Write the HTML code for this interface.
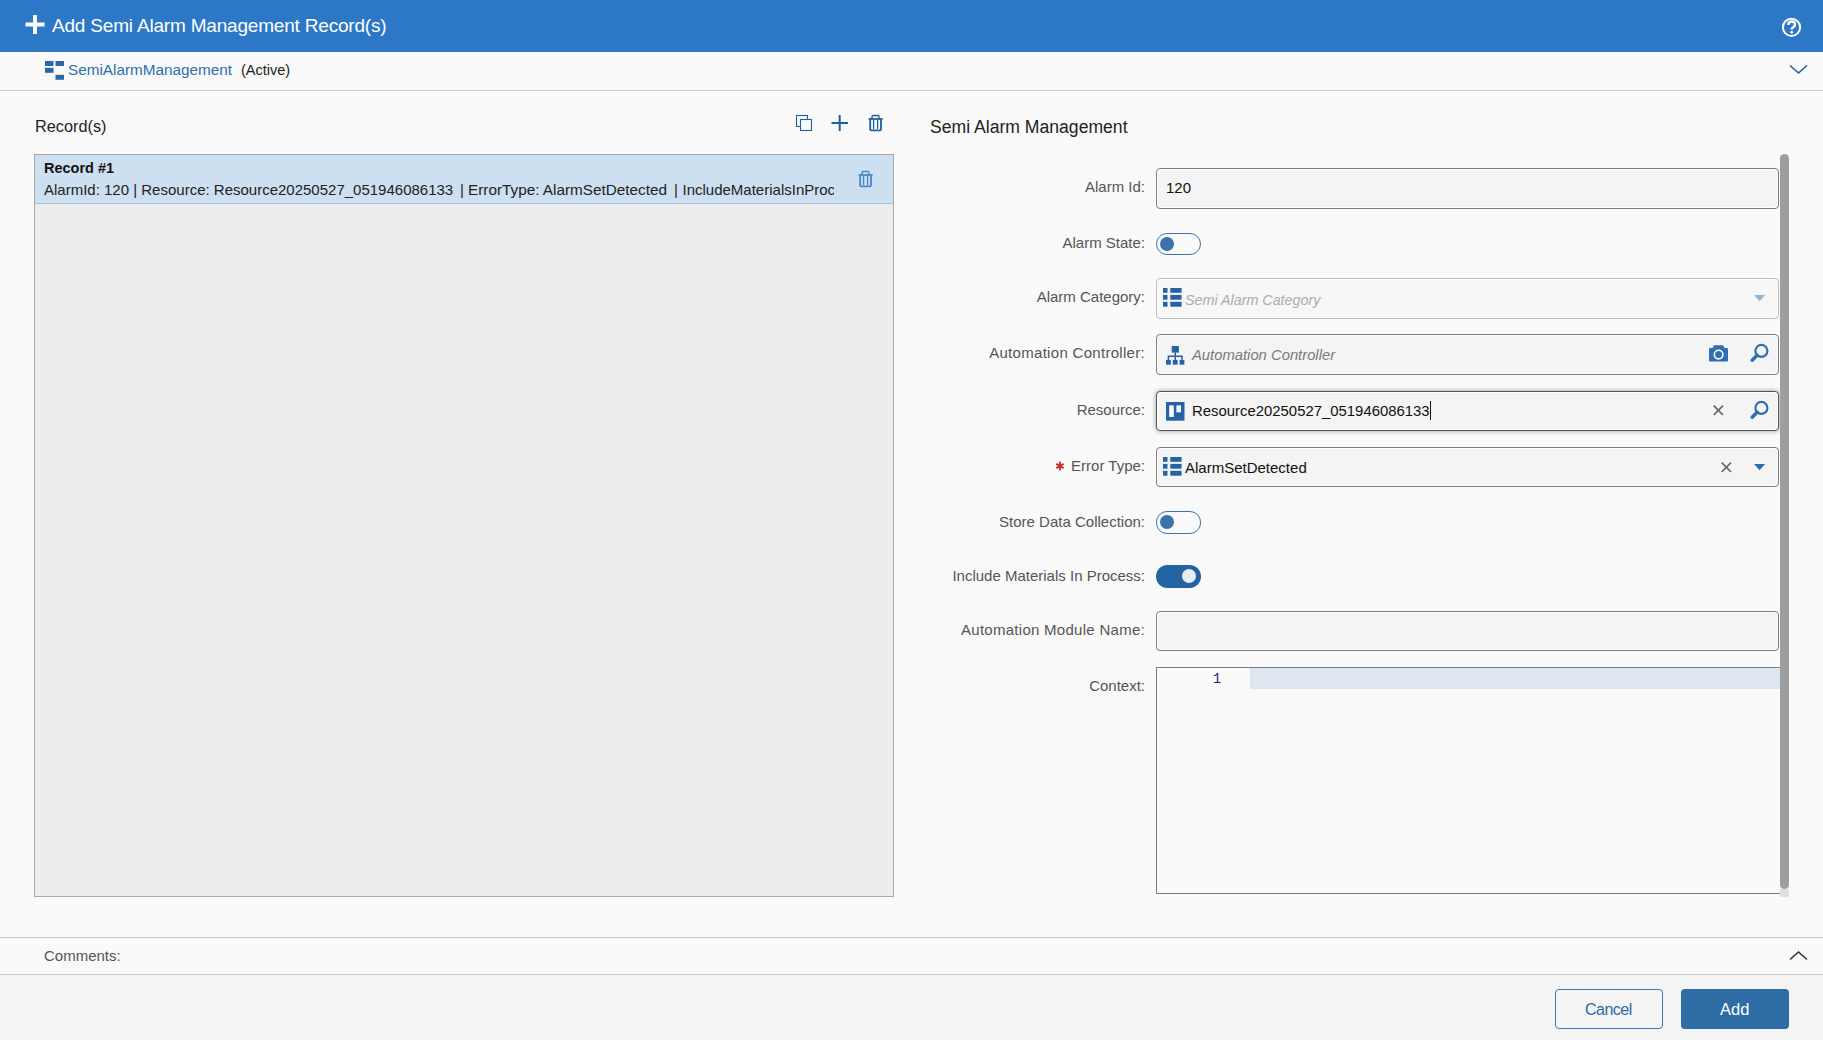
<!DOCTYPE html>
<html><head><meta charset="utf-8">
<style>
*{margin:0;padding:0;box-sizing:border-box}
html,body{width:1823px;height:1040px;overflow:hidden;background:#fafafa;font-family:"Liberation Sans",sans-serif;color:#222}
.a{position:absolute}
.t{position:absolute;white-space:nowrap;line-height:20px}
svg{position:absolute;overflow:visible}
#hdr{left:0;top:0;width:1823px;height:52px;background:#2c78c6}
#sub{left:0;top:52px;width:1823px;height:39px;background:#fafafa;border-bottom:1px solid #cbcbcb}
.lbl{position:absolute;right:678px;white-space:nowrap;line-height:20px;font-size:15px;color:#555;margin-top:1px}
.inp{position:absolute;left:1156px;width:623px;height:41px;background:#f4f4f4;border:1px solid #7d7d7d;border-radius:4px;box-shadow:inset 0 0 0 1px #fff}
.tog{position:absolute;left:1156px;width:45px;height:22px;border:1.5px solid #3b74ae;border-radius:11px;background:#fafafa}
.tog i{position:absolute;left:2.5px;top:2.5px;width:14px;height:14px;border-radius:50%;background:#3a72aa}
</style></head><body>

<!-- header -->
<div id="hdr" class="a"></div>
<svg width="20" height="20" style="left:25px;top:15px"><path d="M10 0V19M0.5 9.5H19.5" stroke="#fff" stroke-width="4"/></svg>
<div class="t" style="left:52px;top:16px;font-size:19px;letter-spacing:-0.19px;color:#fff">Add Semi Alarm Management Record(s)</div>
<svg width="22" height="22" style="left:1781px;top:17px"><circle cx="10.5" cy="10.3" r="8.6" fill="none" stroke="#fff" stroke-width="2"/><path d="M7.4 8Q7.4 4.6 10.7 4.6Q14 4.6 14 7.6Q14 9.4 12 10.4Q10.7 11 10.7 12.6" fill="none" stroke="#fff" stroke-width="2.5"/><circle cx="10.7" cy="15.2" r="1.35" fill="#fff"/></svg>

<!-- sub header -->
<div id="sub" class="a"></div>
<svg width="20" height="20" style="left:45px;top:61px"><rect x="0" y="0" width="8.5" height="5" fill="#2b66a6"/><rect x="10.5" y="0" width="8.5" height="5" fill="#2b66a6"/><rect x="0" y="6.8" width="8.5" height="5" fill="#2b66a6"/><rect x="10.5" y="13.8" width="8.5" height="5" fill="#2b66a6"/></svg>
<div class="t" style="left:68px;top:60px;font-size:15.3px;color:#2f6fb0">SemiAlarmManagement</div>
<div class="t" style="left:241px;top:60px;font-size:14.5px;color:#222">(Active)</div>
<svg width="20" height="12" style="left:1789px;top:64px"><path d="M1 1.5L9.5 9L18 1.5" fill="none" stroke="#1f5f9f" stroke-width="1.6"/></svg>

<!-- left panel -->
<div class="t" style="left:35px;top:116px;font-size:16.3px;color:#222">Record(s)</div>
<svg width="18" height="18" style="left:795px;top:114px"><rect x="1.5" y="1.5" width="11" height="11" fill="none" stroke="#1f5fa0" stroke-width="1.1"/><rect x="5.5" y="5.5" width="11" height="11" fill="#fafafa" stroke="#1f5fa0" stroke-width="1.1"/></svg>
<svg width="18" height="18" style="left:831px;top:114px"><path d="M8.7 1V17M0.5 8.9H17" stroke="#1f5fa0" stroke-width="2"/></svg>
<svg width="16" height="18" style="left:868px;top:114px"><path d="M4 4.5V2.8Q4 1.5 5.5 1.5H9.5Q11 1.5 11 2.8V4.5" fill="none" stroke="#1f5fa0" stroke-width="1.4"/><path d="M0.6 5H14.6" stroke="#1f5fa0" stroke-width="1.8"/><path d="M2.2 5.5V15.2Q2.2 16.4 3.4 16.4H11.8Q13 16.4 13 15.2V5.5" fill="none" stroke="#1f5fa0" stroke-width="1.8"/><path d="M5.6 6V15M9.6 6V15" stroke="#1f5fa0" stroke-width="1.3"/></svg>

<div class="a" style="left:34px;top:154px;width:860px;height:743px;background:#ededed;border:1px solid #a8a8a8"></div>
<div class="a" style="left:35px;top:155px;width:858px;height:49px;background:#cde0f1;border-bottom:1px solid #a7c0d6"></div>
<div class="t" style="left:44px;top:158px;font-size:14.5px;font-weight:700;color:#111">Record #1</div>
<div class="t" style="left:44px;top:180px;font-size:15px;color:#222">AlarmId: 120 | Resource: Resource20250527_051946086133</div>
<div class="t" style="left:460px;top:180px;font-size:15px;color:#222">|</div>
<div class="t" style="left:468px;top:180px;font-size:15.3px;color:#222">ErrorType: AlarmSetDetected</div>
<div class="t" style="left:674px;top:180px;font-size:15px;color:#222">|</div>
<div class="t" style="left:682.5px;top:180px;font-size:15px;color:#222;width:151.5px;overflow:hidden">IncludeMaterialsInProcess: true</div>
<svg width="16" height="18" style="left:858px;top:170px"><path d="M4 4.5V2.8Q4 1.5 5.5 1.5H9.5Q11 1.5 11 2.8V4.5" fill="none" stroke="#4a86c1" stroke-width="1.4"/><path d="M0.6 5H14.6" stroke="#4a86c1" stroke-width="1.8"/><path d="M2.2 5.5V15.2Q2.2 16.4 3.4 16.4H11.8Q13 16.4 13 15.2V5.5" fill="none" stroke="#4a86c1" stroke-width="1.8"/><path d="M5.6 6V15M9.6 6V15" stroke="#4a86c1" stroke-width="1.3"/></svg>

<!-- right panel -->
<div class="t" style="left:930px;top:117px;font-size:17.6px;color:#222">Semi Alarm Management</div>

<!-- FORM -->
<div class="lbl" style="top:176px">Alarm Id:</div>
<div class="inp" style="top:168px"></div>
<div class="t" style="left:1166px;top:178px;font-size:15px;color:#111">120</div>

<div class="lbl" style="top:232px">Alarm State:</div>
<div class="tog" style="top:233px"><i></i></div>

<div class="lbl" style="top:286px">Alarm Category:</div>
<div class="inp" style="top:278px;background:#f7f7f7;border-color:#bdbdbd"></div>
<svg width="20" height="20" style="left:1162.5px;top:288px"><g fill="#2563a6"><rect x="0" y="0" width="4.5" height="4.8"/><rect x="7.3" y="0" width="11.3" height="4.8"/><rect x="0" y="6.9" width="4.5" height="4.8"/><rect x="7.3" y="6.9" width="11.3" height="4.8"/><rect x="0" y="13.8" width="4.5" height="4.9"/><rect x="7.3" y="13.8" width="11.3" height="4.9"/></g></svg>
<div class="t" style="left:1185px;top:289.5px;font-size:14.3px;font-style:italic;color:#adadad">Semi Alarm Category</div>
<svg width="12" height="7" style="left:1753.5px;top:295px"><path d="M0 0H11.2L5.6 6.2Z" fill="#95b6d4"/></svg>

<div class="lbl" style="top:342px;letter-spacing:0.3px">Automation Controller:</div>
<div class="inp" style="top:334px"></div>
<svg width="20" height="20" style="left:1166px;top:346px"><g fill="#2563a6"><rect x="5.7" y="0" width="7.2" height="6.6"/><rect x="0" y="14" width="4.8" height="4.7"/><rect x="6.8" y="14" width="4.8" height="4.7"/><rect x="13.6" y="14" width="4.8" height="4.7"/></g><path d="M9.3 6.6V14M2.4 14V10.2H16V14" fill="none" stroke="#2563a6" stroke-width="1.5"/></svg>
<div class="t" style="left:1192px;top:345px;font-size:14.8px;font-style:italic;color:#7a7a7a">Automation Controller</div>
<svg width="20" height="18" style="left:1709px;top:345px"><path d="M3.5 3.3L4.8 0.3H14.2L15.5 3.3Z" fill="#3170ae"/><rect x="0" y="3" width="19" height="13.5" rx="1.2" fill="#3170ae"/><circle cx="9.6" cy="9.6" r="4.3" fill="none" stroke="#fff" stroke-width="1.6"/><circle cx="9.6" cy="9.6" r="2.4" fill="#3170ae"/></svg>
<svg width="20" height="20" style="left:1750px;top:342px"><circle cx="11.4" cy="8.9" r="6" fill="none" stroke="#2f6fad" stroke-width="2.2"/><path d="M7.2 13.2L2.2 18.2" stroke="#2f6fad" stroke-width="3.4" stroke-linecap="round"/></svg>

<div class="lbl" style="top:399px">Resource:</div>
<div class="inp" style="top:391px;height:40px;border-color:#555;box-shadow:inset 0 0 0 1px #fff,0 0 5px rgba(0,0,0,0.4)"></div>
<svg width="20" height="20" style="left:1166px;top:402px"><rect x="0" y="0" width="18.5" height="18.7" fill="#2563a6"/><rect x="3.2" y="3.4" width="4.6" height="11.6" fill="#fff"/><rect x="10.4" y="3.4" width="4.6" height="6.9" fill="#fff"/></svg>
<div class="t" style="left:1192px;top:401px;font-size:14.9px;color:#111">Resource20250527_051946086133</div>
<div class="a" style="left:1429.5px;top:401px;width:1.2px;height:19px;background:#111"></div>
<svg width="12" height="12" style="left:1713px;top:405px"><path d="M0.7 0.7L10 10M10 0.7L0.7 10" stroke="#666" stroke-width="1.7"/></svg>
<svg width="20" height="20" style="left:1750px;top:399px"><circle cx="11.4" cy="8.9" r="6" fill="none" stroke="#2f6fad" stroke-width="2.2"/><path d="M7.2 13.2L2.2 18.2" stroke="#2f6fad" stroke-width="3.4" stroke-linecap="round"/></svg>

<div class="lbl" style="top:455px">Error Type:</div>
<svg width="12" height="12" style="left:1054px;top:459.5px"><g transform="translate(5.9,6)" stroke="#c0392b" stroke-width="2"><path d="M0 -4.6V4.5M-3.7 -2.1L3.7 2.1M-3.7 2.1L3.7 -2.1"/></g></svg>
<div class="inp" style="top:447px;height:40px"></div>
<svg width="20" height="20" style="left:1162.5px;top:457px"><g fill="#2563a6"><rect x="0" y="0" width="4.5" height="4.8"/><rect x="7.3" y="0" width="11.3" height="4.8"/><rect x="0" y="6.9" width="4.5" height="4.8"/><rect x="7.3" y="6.9" width="11.3" height="4.8"/><rect x="0" y="13.8" width="4.5" height="4.9"/><rect x="7.3" y="13.8" width="11.3" height="4.9"/></g></svg>
<div class="t" style="left:1185px;top:458px;font-size:15px;color:#111">AlarmSetDetected</div>
<svg width="12" height="12" style="left:1720.7px;top:462px"><path d="M0.7 0.7L10 10M10 0.7L0.7 10" stroke="#666" stroke-width="1.7"/></svg>
<svg width="12" height="7" style="left:1753.5px;top:464px"><path d="M0 0H11.2L5.6 6.2Z" fill="#2e6eb0"/></svg>

<div class="lbl" style="top:511px">Store Data Collection:</div>
<div class="tog" style="top:511px;height:23px"><i style="top:3px"></i></div>

<div class="lbl" style="top:565px">Include Materials In Process:</div>
<div class="tog" style="top:565px;height:23px;background:#2264a2;border-color:#2264a2"><i style="top:3px;left:25px;background:#e8eef6"></i></div>

<div class="lbl" style="top:619px;letter-spacing:0.28px">Automation Module Name:</div>
<div class="inp" style="top:611px;height:40px"></div>

<div class="lbl" style="top:675px">Context:</div>
<div class="a" style="left:1156px;top:667px;width:625px;height:227px;border:1px solid #7d7d7d;border-right:none;background:#fafafa"></div>
<div class="a" style="left:1250px;top:668px;width:530px;height:21px;background:#dfe6ef"></div>
<div class="t" style="left:1212.7px;top:669px;font-size:14px;font-family:'Liberation Mono',monospace;color:#1f1f8a">1</div>

<div class="a" style="left:1780px;top:889px;width:9px;height:8px;background:#e1e1e1"></div>
<div class="a" style="left:1780px;top:154px;width:9px;height:735px;background:#9e9e9e;border-radius:4.5px"></div>


<!-- comments & footer -->
<div class="a" style="left:0;top:937px;width:1823px;height:1px;background:#c9c9c9"></div>
<div class="t" style="left:44px;top:946px;font-size:15px;color:#555">Comments:</div>
<svg width="20" height="12" style="left:1789px;top:950px"><path d="M1 9.5L9.5 2L18 9.5" fill="none" stroke="#333" stroke-width="1.6"/></svg>
<div class="a" style="left:0;top:974px;width:1823px;height:66px;background:#f4f4f4;border-top:1px solid #c9c9c9"></div>
<div class="a" style="left:1555px;top:989px;width:108px;height:40px;border:1px solid #3b77b2;border-radius:4px;background:#f4f4f4"></div>
<div class="t" style="left:1585px;top:1000px;font-size:16px;letter-spacing:-0.5px;color:#2f6aa6">Cancel</div>
<div class="a" style="left:1681px;top:989px;width:108px;height:40px;border-radius:4px;background:#2d6ca4"></div>
<div class="t" style="left:1720px;top:999px;font-size:16.5px;color:#fff">Add</div>
</body></html>
